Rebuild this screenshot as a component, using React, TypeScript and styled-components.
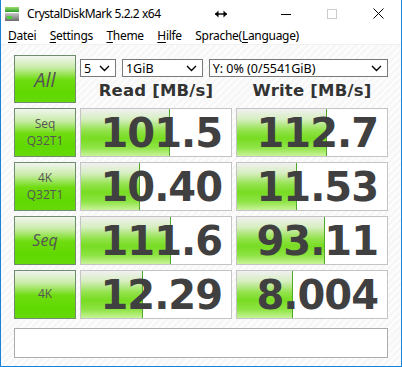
import { Fragment } from 'react'
import styled, { createGlobalStyle } from 'styled-components'

const GlobalStyle = createGlobalStyle`
  html, body {
    margin: 0;
    padding: 0;
    background: #ffffff;
  }
  * {
    box-sizing: border-box;
  }
`

const Window = styled.div`
  width: 402px;
  height: 367px;
  display: flex;
  flex-direction: column;
  border: 1px solid #1883d7;
  border-top: none;
  background: #ffffff;
  font-family: 'Noto Sans', 'Open Sans', sans-serif;
  color: #000;
  overflow: hidden;
`

const TitleBar = styled.div`
  height: 27px;
  display: flex;
  align-items: center;
  padding-left: 3px;
  flex-shrink: 0;
`

const TitleText = styled.span`
  font-size: 12px;
  letter-spacing: -0.45px;
  margin-left: 7px;
  white-space: nowrap;
`

const Caption = styled.div`
  margin-left: auto;
  display: flex;
  height: 100%;
`

const CaptionBtn = styled.div<{ $w?: number }>`
  width: ${({ $w }) => $w ?? 46}px;
  height: 100%;
  display: flex;
  align-items: center;
  justify-content: center;
`

const MenuBar = styled.div`
  height: 17px;
  display: flex;
  align-items: center;
  padding-left: 7px;
  font-size: 12px;
  letter-spacing: -0.3px;
  flex-shrink: 0;
  border-bottom: 1px solid #f0f0f0;
  box-sizing: content-box;
`

const MenuItem = styled.span`
  margin-right: 13.5px;
  white-space: nowrap;
  u {
    text-decoration: underline;
    text-underline-offset: 2px;
  }
`

const Content = styled.div`
  flex: 1;
  padding: 10px 12px 8px 13px;
  background: repeating-linear-gradient(
    135deg,
    #f7f7f7 0px,
    #f7f7f7 3px,
    #fdfdfd 3px,
    #fdfdfd 5px
  );
  display: flex;
  flex-direction: column;
`

const Grid = styled.div`
  display: grid;
  grid-template-columns: 62px 152px 152px;
  grid-template-rows: 48px repeat(4, 49px);
  column-gap: 4px;
  row-gap: 5px;
`

const LabelButton = styled.div<{ $size?: number; $italic?: boolean }>`
  border: 1px solid #6f8c6f;
  background: linear-gradient(
    to bottom,
    #f2f5f0 0%,
    #c9eca8 25%,
    #6fdc10 52%,
    #5fd800 80%,
    #66da0a 100%
  );
  display: flex;
  flex-direction: column;
  align-items: center;
  justify-content: center;
  text-align: center;
  color: #555555;
  font-family: 'Open Sans', 'Noto Sans', sans-serif;
  font-size: ${({ $size }) => $size ?? 12}px;
  font-style: ${({ $italic }) => ($italic ? 'italic' : 'normal')};
  line-height: 1.35;
`

const TopPanel = styled.div`
  grid-column: 2 / 4;
  display: flex;
  flex-direction: column;
  padding-top: 4px;
`

const SelectRow = styled.div`
  display: flex;
  gap: 6px;
`

const Select = styled.div<{ $w: number }>`
  width: ${({ $w }) => $w}px;
  height: 18px;
  border: 1px solid #7a7a7a;
  background: #ffffff;
  display: flex;
  align-items: center;
  justify-content: space-between;
  padding: 0 5px 0 3px;
  font-size: 12.5px;
  white-space: nowrap;
`

const Headers = styled.div`
  display: grid;
  grid-template-columns: 152px 152px;
  column-gap: 4px;
  margin-top: 4px;
`

const Header = styled.div`
  text-align: center;
  font-family: 'DejaVu Sans', sans-serif;
  font-weight: bold;
  font-size: 16.5px;
  color: #333333;
  letter-spacing: 0.2px;
`

const ValueBox = styled.div`
  position: relative;
  border: 1px solid #c4c4c4;
  background: #ffffff;
  display: flex;
  align-items: center;
  justify-content: flex-end;
  padding-right: 9px;
  overflow: hidden;
`

const Bar = styled.div`
  position: absolute;
  left: 0;
  top: 0;
  bottom: 0;
  border-right: 1px solid #4fa82a;
  background: linear-gradient(
    to bottom,
    #f1f1f1 0%,
    #d6eec0 22%,
    #94e34e 45%,
    #78dc22 62%,
    #8ee444 82%,
    #c9f39a 100%
  );
`

const Value = styled.span`
  position: relative;
  font-family: 'DejaVu Sans', sans-serif;
  font-weight: bold;
  font-size: 40px;
  color: #404040;
  letter-spacing: -1px;
  line-height: 1;
`

const Status = styled.div`
  margin-top: 9px;
  height: 30px;
  width: 374px;
  border: 1px solid #acacac;
  background: #ffffff;
`

const Chevron = () => (
  <svg width="11" height="7" viewBox="0 0 11 7">
    <path d="M1 1 L5.5 5.5 L10 1" fill="none" stroke="#000" strokeWidth="1.4" />
  </svg>
)

const AppIcon = () => (
  <svg width="16" height="16" viewBox="0 0 16 16">
    <defs>
      <linearGradient id="ig" x1="0" y1="0" x2="0" y2="1">
        <stop offset="0" stopColor="#9be06a" />
        <stop offset="1" stopColor="#2e9a2e" />
      </linearGradient>
      <linearGradient id="ib" x1="0" y1="0" x2="0" y2="1">
        <stop offset="0" stopColor="#c8c8c8" />
        <stop offset="1" stopColor="#6a6a6a" />
      </linearGradient>
    </defs>
    <rect x="1" y="1" width="14" height="5" fill="url(#ig)" />
    <rect x="1" y="7" width="14" height="8" fill="url(#ib)" />
    <rect x="3" y="10" width="5" height="3" fill="#4ccf3a" />
  </svg>
)

type Row = {
  label: string[]
  size?: number
  italic?: boolean
  read: string
  readBar: number
  write: string
  writeBar: number
}

const rows: Row[] = [
  { label: ['Seq', 'Q32T1'], read: '101.5', readBar: 89, write: '112.7', writeBar: 90 },
  { label: ['4K', 'Q32T1'], read: '10.40', readBar: 59, write: '11.53', writeBar: 60 },
  { label: ['Seq'], size: 16, italic: true, read: '111.6', readBar: 90, write: '93.11', writeBar: 88 },
  { label: ['4K'], read: '12.29', readBar: 62, write: '8.004', writeBar: 56 },
]

export default function App() {
  return (
    <>
      <GlobalStyle />
      <Window>
        <TitleBar>
          <AppIcon />
          <TitleText>CrystalDiskMark 5.2.2 x64</TitleText>
          <Caption>
            <CaptionBtn $w={46}>
              <svg width="12" height="8" viewBox="0 0 12 8">
                <path d="M0 4 L12 4" stroke="#000" strokeWidth="1.4" />
                <path d="M0 4 L3.5 0.5 L3.5 7.5 Z M12 4 L8.5 0.5 L8.5 7.5 Z" fill="#000" />
              </svg>
            </CaptionBtn>
            <CaptionBtn $w={19} />
            <CaptionBtn>
              <svg width="10" height="10" viewBox="0 0 10 10">
                <path d="M0 5.5 L10 5.5" stroke="#000" strokeWidth="1" />
              </svg>
            </CaptionBtn>
            <CaptionBtn>
              <svg width="10" height="10" viewBox="0 0 10 10">
                <rect x="0.5" y="0.5" width="9" height="9" fill="none" stroke="#cccccc" strokeWidth="1" />
              </svg>
            </CaptionBtn>
            <CaptionBtn>
              <svg width="11" height="11" viewBox="0 0 11 11">
                <path d="M0.5 0.5 L10.5 10.5 M10.5 0.5 L0.5 10.5" stroke="#000" strokeWidth="1" />
              </svg>
            </CaptionBtn>
          </Caption>
        </TitleBar>
        <MenuBar>
          <MenuItem>
            <u>D</u>atei
          </MenuItem>
          <MenuItem>
            <u>S</u>ettings
          </MenuItem>
          <MenuItem>
            <u>T</u>heme
          </MenuItem>
          <MenuItem>
            <u>H</u>ilfe
          </MenuItem>
          <MenuItem>
            Sprache(<u>L</u>anguage)
          </MenuItem>
        </MenuBar>
        <Content>
          <Grid>
            <LabelButton $size={20} $italic>
              All
            </LabelButton>
            <TopPanel>
              <SelectRow>
                <Select $w={36}>
                  5<Chevron />
                </Select>
                <Select $w={81}>
                  1GiB<Chevron />
                </Select>
                <Select $w={180}>
                  Y: 0% (0/5541GiB)<Chevron />
                </Select>
              </SelectRow>
              <Headers>
                <Header>Read [MB/s]</Header>
                <Header>Write [MB/s]</Header>
              </Headers>
            </TopPanel>
            {rows.map((r) => (
              <Fragment key={r.read}>
                <LabelButton $size={r.size} $italic={r.italic}>
                  {r.label.map((t) => (
                    <span key={t}>{t}</span>
                  ))}
                </LabelButton>
                <ValueBox>
                  <Bar style={{ width: r.readBar }} />
                  <Value>{r.read}</Value>
                </ValueBox>
                <ValueBox>
                  <Bar style={{ width: r.writeBar }} />
                  <Value>{r.write}</Value>
                </ValueBox>
              </Fragment>
            ))}
          </Grid>
          <Status />
        </Content>
      </Window>
    </>
  )
}
